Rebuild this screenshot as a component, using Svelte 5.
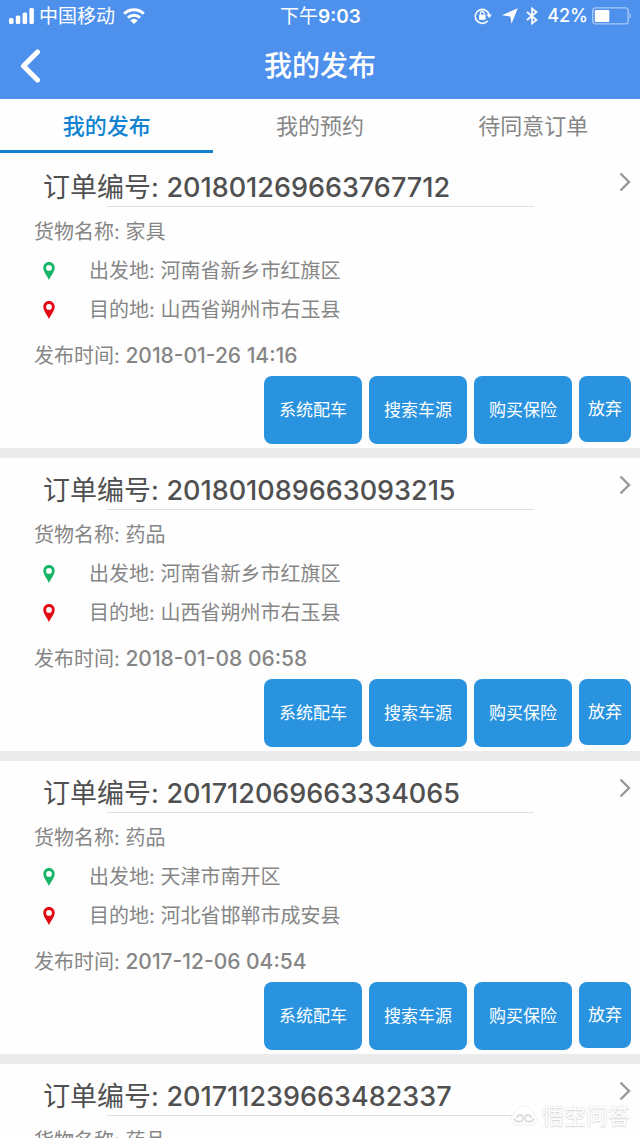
<script>
  const tabs = ['我的发布', '我的预约', '待同意订单'];
  let active = $state(0);

  const actions = ['系统配车', '搜索车源', '购买保险', '放弃'];

  const orders = [
    { id: '201801269663767712', goods: '家具', from: '河南省新乡市红旗区', to: '山西省朔州市右玉县', time: '2018-01-26 14:16' },
    { id: '201801089663093215', goods: '药品', from: '河南省新乡市红旗区', to: '山西省朔州市右玉县', time: '2018-01-08 06:58' },
    { id: '201712069663334065', goods: '药品', from: '天津市南开区', to: '河北省邯郸市成安县', time: '2017-12-06 04:54' },
    { id: '201711239663482337', goods: '药品' }
  ];
</script>

{#snippet pin(color)}
  <svg class="pin" width="12" height="18" viewBox="0 0 12 18" aria-hidden="true">
    <path fill={color} fill-rule="evenodd" d="M6 0C2.6 0 .3 2.5.3 5.8.3 9.600 3.600 13 6 18c2.400-5 5.700-8.400 5.700-12.200C11.700 2.500 9.400 0 6 0Zm0 3a2.900 2.900 0 1 1 0 5.800A2.900 2.900 0 0 1 6 3Z" />
  </svg>
{/snippet}

<div class="page">
  <header>
    <div class="status">
      <div class="side">
        <svg width="26" height="16" viewBox="0 0 26 16" fill="#fff" aria-hidden="true">
          <rect x="0" y="10" width="4.500" height="6" rx="1.500" />
          <rect x="6.800" y="7.500" width="4.500" height="8.500" rx="1.500" />
          <rect x="13.600" y="4.500" width="4.500" height="11.500" rx="1.500" />
          <rect x="20.400" y="0" width="4.500" height="16" rx="1.500" />
        </svg>
        <span class="carrier">中国移动</span>
        <svg width="22" height="16" viewBox="0 0 22 16" aria-hidden="true">
          <g fill="none" stroke="#fff" stroke-width="3">
            <path d="M1.200 5.700a14 14 0 0 1 19.600 0" />
            <path d="M4.900 9.700a8.700 8.700 0 0 1 12.200 0" />
          </g>
          <path fill="#fff" d="M7.300 12.400a5.200 5.200 0 0 1 7.400 0L11 16Z" />
        </svg>
      </div>
      <span class="clock">下午<b>9:03</b></span>
      <div class="side right">
        <svg width="18" height="18" viewBox="0 0 18 18" aria-hidden="true">
          <path fill="none" stroke="#fff" stroke-width="1.600" d="M13.600 14A7 7 0 1 1 15.200 8" />
          <path fill="#fff" d="m12.400 7.600 5.400-.2-2.500 3.700Z" />
          <rect x="5" y="7.800" width="6.600" height="5" rx=".6" fill="#fff" />
          <path fill="none" stroke="#fff" stroke-width="1.300" d="M6.500 8V6.300a1.800 1.800 0 0 1 3.600 0V8" />
        </svg>
        <svg class="arrow" width="16" height="16" viewBox="0 0 16 16" fill="#fff" aria-hidden="true">
          <path d="M15.800.2 9.500 15.800 8.300 8.500 0 7.300Z" />
        </svg>
        <svg class="bluetooth" width="12" height="18" viewBox="0 0 12 18" fill="none" stroke="#fff" stroke-width="1.700" aria-hidden="true">
          <path d="m1 5 9.500 8L6 16.500v-15L10.500 5 1 13" />
        </svg>
        <span class="percent">42%</span>
        <svg width="40" height="18" viewBox="0 0 40 18" aria-hidden="true">
          <rect x=".7" y=".9" width="35.500" height="16" rx="3" fill="none" stroke="#fff" stroke-opacity=".5" stroke-width="1.400" />
          <rect x="2.800" y="3" width="14.500" height="12" rx="1.200" fill="#fff" />
          <path fill="#fff" fill-opacity=".5" d="M37.600 6c1.800.8 1.800 5.200 0 6Z" />
        </svg>
      </div>
    </div>
    <div class="nav">
      <button class="back" aria-label="返回">
        <svg width="20" height="34" viewBox="0 0 20 34" fill="none" stroke="#fff" stroke-width="5" stroke-linecap="round" stroke-linejoin="round" aria-hidden="true">
          <path d="M17.500 3 3.500 17l14 14" />
        </svg>
      </button>
      <h1>我的发布</h1>
    </div>
  </header>

  <nav class="tabs">
    {#each tabs as tab, i}
      <button class:active={active === i} onclick={() => (active = i)}>{tab}</button>
    {/each}
  </nav>

  <main>
    {#each orders as order}
      <article>
        <div class="head">
          <h2>订单编号: <b>{order.id}</b></h2>
          <svg class="more" width="12" height="20" viewBox="0 0 12 20" fill="none" stroke="#999" stroke-width="2.400" aria-hidden="true">
            <path d="m1.500 1.500 8.500 8.500-8.500 8.500" />
          </svg>
        </div>
        <hr />
        <p class="line goods">货物名称: {order.goods}</p>
        {#if order.from}
          <p class="place">{@render pin('#17b568')}<span>出发地: {order.from}</span></p>
          <p class="place">{@render pin('#e30613')}<span>目的地: {order.to}</span></p>
          <p class="line time">发布时间: <time>{order.time}</time></p>
          <div class="actions">
            {#each actions as action}
              <button class:small={action.length === 2}>{action}</button>
            {/each}
          </div>
        {/if}
      </article>
    {/each}
  </main>

  <div class="watermark">
    <svg width="28" height="22" viewBox="0 0 28 22" fill="#fff" stroke="#dcdcdc" stroke-width="1" aria-hidden="true">
      <path stroke="#efefef" d="M4 10C5 4 9 1 14 1s9 3 10 9c3 1 4 4 2 7-2 4-9 5-12 1-3 4-10 3-12-1-2-3-1-6 2-7Z" />
      <path fill="none" stroke-width="1.800" d="M4 13c1 5 9 5 9 0 0-4-6-4-6 0m17 0c-1 5-9 5-9 0 0-4 6-4 6 0" />
    </svg>
    <span>悟空问答</span>
  </div>
</div>

<style>
  :global(body) {
    margin: 0;
    background: #fefefe;
  }

  .page {
    display: flex;
    flex-direction: column;
    height: 100vh;
    overflow: hidden;
    font-family: Inter, "Noto Sans CJK SC", sans-serif;
    color: #868686;
  }

  button {
    margin: 0;
    padding: 0;
    border: 0;
    background: none;
    font: inherit;
    color: inherit;
    cursor: pointer;
  }

  header {
    flex: none;
    background: #4e91ed;
    color: #fff;
  }

  .status {
    display: grid;
    grid-template-columns: 1fr auto 1fr;
    align-items: center;
    height: 32px;
    padding: 0 8px 0 9px;
    font-size: 19px;
    line-height: 32px;
  }

  .side {
    display: flex;
    align-items: center;
  }

  .right {
    justify-content: flex-end;
  }

  .carrier {
    margin: 0 8px 0 4px;
  }

  .carrier,
  .clock {
    padding-top: 2px;
    line-height: 30px;
  }

  .clock b {
    font-weight: 600;
  }

  .arrow {
    margin: 0 8px 0 10px;
  }

  .bluetooth {
    margin-right: 9px;
  }

  .percent {
    margin-right: 4px;
    font-size: 18px;
    font-weight: 500;
  }

  .nav {
    display: grid;
    grid-template-columns: 60px 1fr 60px;
    align-items: center;
    height: 67px;
  }

  .back {
    display: flex;
    padding-left: 20px;
  }

  h1 {
    margin: 0;
    font-size: 28px;
    font-weight: 500;
    line-height: 66px;
    text-align: center;
  }

  .tabs {
    display: flex;
    flex: none;
    padding-bottom: 2px;
  }

  .tabs button {
    flex: 1;
    height: 54px;
    padding-top: 3px;
    border-bottom: 3px solid transparent;
    font-size: 22px;
    line-height: 48px;
  }

  .tabs .active {
    border-color: #147fcc;
    color: #0f83d2;
    font-weight: 500;
  }

  main {
    display: flex;
    flex: 1;
    flex-direction: column;
    min-height: 0;
    overflow-y: auto;
    scrollbar-width: none;
  }

  article {
    flex: none;
    padding-bottom: 4px;
    border-bottom: 10px solid #ebebeb;
  }

  article:last-child {
    border-bottom: 0;
  }

  .head {
    display: flex;
    justify-content: space-between;
    padding: 15px 9px 0 43px;
  }

  h2 {
    margin: 0;
    color: #505050;
    font-size: 27px;
    font-weight: 400;
    line-height: 36px;
  }

  h2 b {
    font-weight: 500;
  }

  .more {
    margin-top: 2px;
  }

  hr {
    height: 1px;
    margin: 0 106px 0 107px;
    border: 0;
    background: #dedede;
  }

  p {
    margin: 0;
    font-size: 20px;
  }

  .line {
    padding-left: 34px;
    line-height: 40px;
  }

  .goods {
    margin-top: 5px;
  }

  .place {
    display: flex;
    align-items: center;
    gap: 34px;
    padding-left: 43px;
    line-height: 39px;
  }

  .pin {
    margin-bottom: 2px;
  }

  .time {
    margin-top: 6px;
  }

  time {
    font-size: 21px;
    font-weight: 500;
  }

  .actions {
    display: flex;
    justify-content: flex-end;
    align-items: flex-start;
    gap: 7px;
    padding-right: 9px;
  }

  .actions button {
    width: 98px;
    height: 68px;
    padding-bottom: 3px;
    border-radius: 8px;
    background: #2993df;
    color: #fff;
    font-size: 17px;
  }

  .actions .small {
    width: 52px;
    height: 66px;
  }

  .watermark {
    position: fixed;
    right: 10px;
    bottom: 8px;
    display: flex;
    align-items: center;
    gap: 4px;
    color: #fff;
    font-size: 22px;
    line-height: 28px;
    text-shadow: 0 0 2px #ccc, 0 1px 1px #ddd;
    pointer-events: none;
  }
</style>
